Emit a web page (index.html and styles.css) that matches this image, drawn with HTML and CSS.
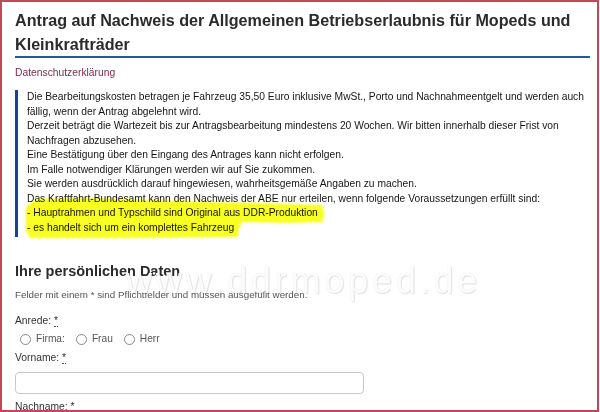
FILE: index.html
```html
<!DOCTYPE html>
<html lang="de">
<head>
<meta charset="utf-8">
<title>Antrag ABE</title>
<link rel="stylesheet" href="styles.css">
</head>
<body>
<div class="frame">
  <div class="content">
    <h1 class="title">Antrag auf Nachweis der Allgemeinen Betriebserlaubnis für Mopeds und<br>Kleinkrafträder</h1>
    <a class="privacy" href="#">Datenschutzerklärung</a>
    <div class="notice">
      <div class="line">Die Bearbeitungskosten betragen je Fahrzeug 35,50 Euro inklusive MwSt., Porto und Nachnahmeentgelt und werden auch</div>
      <div class="line">fällig, wenn der Antrag abgelehnt wird.</div>
      <div class="line">Derzeit beträgt die Wartezeit bis zur Antragsbearbeitung mindestens 20 Wochen. Wir bitten innerhalb dieser Frist von</div>
      <div class="line">Nachfragen abzusehen.</div>
      <div class="line">Eine Bestätigung über den Eingang des Antrages kann nicht erfolgen.</div>
      <div class="line">Im Falle notwendiger Klärungen werden wir auf Sie zukommen.</div>
      <div class="line">Sie werden ausdrücklich darauf hingewiesen, wahrheitsgemäße Angaben zu machen.</div>
      <div class="line">Das Kraftfahrt-Bundesamt kann den Nachweis der ABE nur erteilen, wenn folgende Voraussetzungen erfüllt sind:</div>
      <div class="line">- Hauptrahmen und Typschild sind Original aus DDR-Produktion</div>
      <div class="line">- es handelt sich um ein komplettes Fahrzeug</div>
    </div>
    <h2 class="section">Ihre persönlichen Daten</h2>
    <p class="hint">Felder mit einem * sind Pflichtfelder und müssen ausgefüllt werden.</p>
    <div class="field">
      <div class="label">Anrede: <abbr title="Pflichtfeld">*</abbr></div>
      <div class="radios">
        <label class="radio"><input type="radio" name="anrede"> Firma:</label>
        <label class="radio"><input type="radio" name="anrede"> Frau</label>
        <label class="radio"><input type="radio" name="anrede"> Herr</label>
      </div>
    </div>
    <div class="field field-name">
      <div class="label">Vorname: <abbr title="Pflichtfeld">*</abbr></div>
      <input class="text-input" type="text">
    </div>
    <div class="field field-last">
      <div class="label">Nachname: *</div>
    </div>
  </div>
  <svg class="marker" width="600" height="412" viewBox="0 0 600 412">
    <defs>
      <filter id="soft" x="-5%" y="-20%" width="110%" height="140%">
        <feGaussianBlur stdDeviation="0.8"/>
      </filter>
    </defs>
    <path filter="url(#soft)" d="M26 207 L36 199 L90 198 L180 201 L260 203 L322 205 L324 213 L323 222 L290 223 L242 222 L239 229 L238 237 L120 238 L30 238 L26 231 Z" fill="#f8ff22"/>
  </svg>
  <div class="watermark">www.ddrmoped.de</div>
</div>
</body>
</html>
```
FILE: styles.css
```css
* { box-sizing: border-box; }
html, body { margin: 0; padding: 0; background: #fff; }
body { font-family: "Liberation Sans", Arial, sans-serif; }

.frame {
  position: relative;
  width: 599px;
  height: 412px;
  border: 2px solid #c04858;
  overflow: hidden;
  background: #fff;
}

.content {
  padding: 6px 10px 0 13px;
}

.title {
  margin: 0;
  width: 575px;
  font-size: 16.15px;
  line-height: 24px;
  font-weight: bold;
  color: #2b2b2b;
  border-bottom: 2px solid #2c54a0;
  white-space: nowrap;
}

.privacy {
  display: block;
  margin-top: 8px;
  font-size: 10.3px;
  line-height: 14px;
  color: #7a2c4c;
  text-decoration: none;
}

.notice {
  margin-top: 10px;
  border-left: 3px solid #1f3e96;
  padding: 0 0 2px 9px;
  font-size: 10.28px;
  line-height: 14.5px;
  color: #151515;
}

.line { white-space: nowrap; }

.section {
  margin: 25px 0 0;
  font-size: 14.5px;
  line-height: 18px;
  font-weight: bold;
  color: #2b2b2b;
}

.hint {
  margin: 8px 0 0;
  font-size: 9.8px;
  line-height: 14px;
  color: #555;
}

.field { margin-top: 12px; }

.label {
  font-size: 10.3px;
  line-height: 14px;
  color: #333;
}

abbr {
  text-decoration: none;
  border-bottom: 1px dotted #555;
}

.radios {
  display: flex;
  gap: 11px;
  padding-left: 5px;
  margin-top: 4px;
}

.radio {
  display: flex;
  align-items: center;
  gap: 5px;
  font-size: 10.2px;
  line-height: 14px;
  color: #555;
}

.radio input {
  appearance: none;
  -webkit-appearance: none;
  margin: 0;
  width: 11px;
  height: 11px;
  border: 1px solid #8a8a8a;
  border-radius: 50%;
  background: #fff;
}

.field-name { margin-top: 5px; }

.text-input {
  display: block;
  margin-top: 7px;
  width: 349px;
  height: 22px;
  border: 1px solid #c9c9c9;
  border-radius: 4px;
  background: #fff;
}

.field-last { margin-top: 6px; }

.marker {
  position: absolute;
  left: -2px;
  top: -2px;
  mix-blend-mode: multiply;
  pointer-events: none;
}

.watermark {
  position: absolute;
  left: 124px;
  top: 261px;
  font-family: "Liberation Sans", Arial, sans-serif;
  font-size: 36px;
  line-height: 36px;
  letter-spacing: 3.8px;
  color: rgba(255,255,255,0.94);
  text-shadow: 0 0 1px rgba(0,0,0,0.14), 1px 1px 1px rgba(0,0,0,0.1);
  white-space: nowrap;
  pointer-events: none;
}
```
